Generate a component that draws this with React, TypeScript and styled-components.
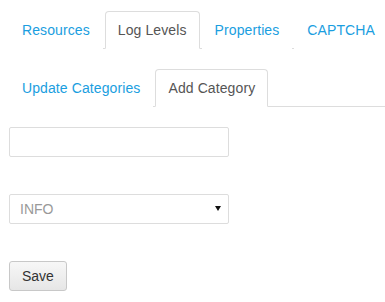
import { useState } from "react";
import styled, { createGlobalStyle } from "styled-components";

const GlobalStyle = createGlobalStyle`
    body {
        margin: 0;
        background: #ffffff;
        font-family: "Liberation Sans", Arial, sans-serif;
        font-size: 14px;
        color: #333333;
    }
`;

const Page = styled.div`
    padding: 11px 0 0 9px;
    display: flex;
    flex-direction: column;
`;

const TabList = styled.ul<{ spaced?: boolean }>`
    list-style: none;
    margin: ${props => props.spaced ? '20px 0 0 0' : '0'};
    padding: 0;
    display: flex;
    border-bottom: 1px solid #dddddd;
`;

const Tab = styled.li<{ active?: boolean }>`
    margin: 0 2px -1px 0;
    padding: 8px 12px;
    line-height: 20px;
    letter-spacing: 0.1px;
    white-space: nowrap;
    border: 1px solid ${props => props.active ? '#dddddd' : 'transparent'};
    border-bottom-color: ${props => props.active ? '#ffffff' : 'transparent'};
    border-radius: 4px 4px 0 0;
    background: #ffffff;
    color: ${props => props.active ? '#555555' : '#1a9ee0'};
    cursor: ${props => props.active ? 'default' : 'pointer'};
`;

const Form = styled.form`
    display: flex;
    flex-direction: column;
    align-items: flex-start;
    gap: 37px;
    margin-top: 20px;
`;

const TextInput = styled.input`
    box-sizing: border-box;
    width: 220px;
    height: 30px;
    padding: 0 10px;
    border: 1px solid #dddddd;
    border-radius: 2px;
    font: inherit;
    color: #555555;
    outline: none;
`;

const SelectWrap = styled.div`
    position: relative;
    width: 220px;
`;

const Select = styled.select`
    box-sizing: border-box;
    width: 100%;
    height: 30px;
    padding: 0 10px;
    border: 1px solid #dddddd;
    border-radius: 2px;
    background: #ffffff;
    font: inherit;
    color: #999999;
    appearance: none;
    outline: none;
`;

const Caret = styled.svg`
    position: absolute;
    right: 8px;
    top: 12px;
    pointer-events: none;
`;

const Button = styled.button`
    box-sizing: border-box;
    height: 30px;
    padding: 0 12px;
    border: 1px solid #c8c8c8;
    border-radius: 3px;
    background: linear-gradient(#f7f7f7, #e6e6e6);
    font: inherit;
    color: #333333;
    cursor: pointer;
`;

const mainTabs = ['Resources', 'Log Levels', 'Properties', 'CAPTCHA'];
const subTabs = ['Update Categories', 'Add Category'];

export default function App() {
    const [mainTab, setMainTab] = useState('Log Levels');
    const [subTab, setSubTab] = useState('Add Category');
    const [level, setLevel] = useState('INFO');

    return (
        <Page>
            <GlobalStyle />
            <TabList>
                {mainTabs.map(name => (
                    <Tab key={name} active={name === mainTab} onClick={() => setMainTab(name)}>{name}</Tab>
                ))}
            </TabList>
            <TabList spaced>
                {subTabs.map(name => (
                    <Tab key={name} active={name === subTab} onClick={() => setSubTab(name)}>{name}</Tab>
                ))}
            </TabList>
            <Form onSubmit={e => e.preventDefault()}>
                <TextInput type="text" />
                <SelectWrap>
                    <Select value={level} onChange={e => setLevel(e.target.value)}>
                        <option>TRACE</option>
                        <option>DEBUG</option>
                        <option>INFO</option>
                        <option>WARN</option>
                        <option>ERROR</option>
                    </Select>
                    <Caret width="6" height="5" viewBox="0 0 6 5">
                        <path d="M0 0h6L3 5z" fill="#111111" />
                    </Caret>
                </SelectWrap>
                <Button type="submit">Save</Button>
            </Form>
        </Page>
    );
}
